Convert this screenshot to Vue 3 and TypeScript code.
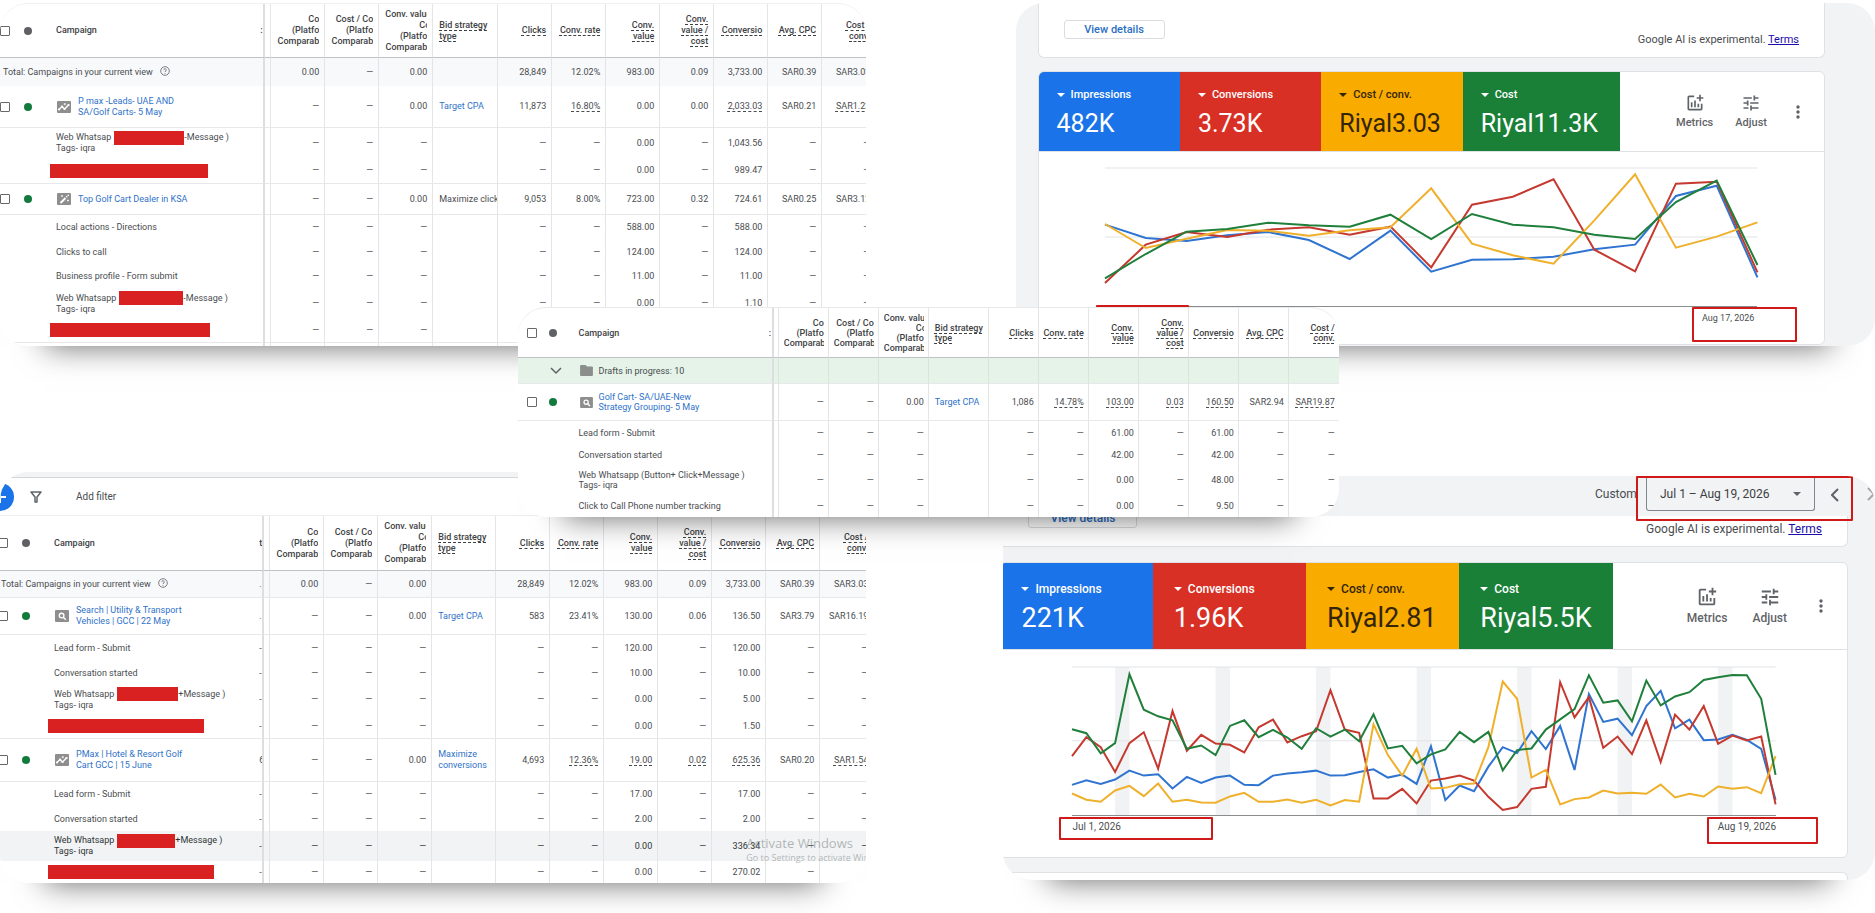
<script setup lang="ts">
type IconName = 'pmax' | 'wand' | 'search' | 'folder'

interface Row {
  kind: 'total' | 'campaign' | 'goal' | 'drafts'
  height: number
  name: string[]
  cells: string[]
  icon?: IconName
  bid?: string
  bidPlain?: boolean
  redact?: number
  after?: string
  bar?: number
  line?: boolean
  hover?: boolean
  tail?: string
}

interface Report {
  id: string
  headHeight: number
  headTail: string
  toolbar?: boolean
  watermark?: boolean
  rows: Row[]
}

interface Series {
  color: string
  points: number[]
}

interface Overview {
  id: string
  range?: string
  tiles: { label: string; value: string; tone: string }[]
  share: number[]
  chartHeight: number
  middle: number
  bands: number[]
  series: Series[]
  from: string
  to: string
}

const D = '—'
// A leading "~" marks a figure with a dashed underline.
const none = [D, D, D, D, D, D, D, D, D, D]
const goal = (value: string, conv: string): string[] => [D, D, D, D, D, value, D, conv, D, D]

const reports: Report[] = [
  {
    id: 'first',
    headHeight: 54,
    headTail: ':',
    rows: [
      { kind: 'total', height: 28, name: ['Total: Campaigns in your current view'], cells: ['0.00', D, '0.00', '28,849', '12.02%', '983.00', '0.09', '3,733.00', 'SAR0.39', 'SAR3.03'] },
      { kind: 'campaign', height: 42, icon: 'pmax', name: ['P max -Leads- UAE AND', 'SA/Golf Carts- 5 May'], bid: 'Target CPA', line: true, cells: [D, D, '0.00', '11,873', '~16.80%', '0.00', '0.00', '~2,033.03', 'SAR0.21', '~SAR1.23'] },
      { kind: 'goal', height: 30, name: ['Web Whatsap', 'Tags- iqra'], redact: 70, after: '-Message )', cells: goal('0.00', '1,043.56') },
      { kind: 'goal', height: 26, name: [], bar: 158, line: true, cells: goal('0.00', '989.47') },
      { kind: 'campaign', height: 31, icon: 'wand', name: ['Top Golf Cart Dealer in KSA'], bid: 'Maximize clicks', bidPlain: true, line: true, cells: [D, D, '0.00', '9,053', '8.00%', '723.00', '0.32', '724.61', 'SAR0.25', 'SAR3.12'] },
      { kind: 'goal', height: 25, name: ['Local actions - Directions'], cells: goal('588.00', '588.00') },
      { kind: 'goal', height: 24, name: ['Clicks to call'], cells: goal('124.00', '124.00') },
      { kind: 'goal', height: 25, name: ['Business profile - Form submit'], cells: goal('11.00', '11.00') },
      { kind: 'goal', height: 29, name: ['Web Whatsapp', 'Tags- iqra'], redact: 64, after: '-Message )', cells: goal('0.00', '1.10') },
      { kind: 'goal', height: 25, name: [], bar: 160, line: true, cells: none },
      { kind: 'goal', height: 3, name: [], cells: [] },
    ],
  },
  {
    id: 'second',
    headHeight: 55,
    headTail: 't',
    toolbar: true,
    watermark: true,
    rows: [
      { kind: 'total', height: 27, name: ['Total: Campaigns in your current view'], line: true, tail: '.', cells: ['0.00', D, '0.00', '28,849', '12.02%', '983.00', '0.09', '3,733.00', 'SAR0.39', 'SAR3.03'] },
      { kind: 'campaign', height: 37, icon: 'search', name: ['Search | Utility & Transport', 'Vehicles | GCC | 22 May'], bid: 'Target CPA', line: true, tail: '.', cells: [D, D, '0.00', '583', '23.41%', '130.00', '0.06', '136.50', 'SAR3.79', 'SAR16.19'] },
      { kind: 'goal', height: 26, name: ['Lead form - Submit'], tail: '-', cells: goal('120.00', '120.00') },
      { kind: 'goal', height: 24, name: ['Conversation started'], tail: '-', cells: goal('10.00', '10.00') },
      { kind: 'goal', height: 29, name: ['Web Whatsapp', 'Tags- iqra'], redact: 61, after: '+Message )', tail: '-', cells: goal('0.00', '5.00') },
      { kind: 'goal', height: 25, name: [], bar: 156, line: true, tail: '-', cells: goal('0.00', '1.50') },
      { kind: 'campaign', height: 43, icon: 'pmax', name: ['PMax | Hotel & Resort Golf', 'Cart GCC | 15 June'], bid: 'Maximize conversions', line: true, tail: '6', cells: [D, D, '0.00', '4,693', '~12.36%', '~19.00', '~0.02', '~625.36', 'SAR0.20', '~SAR1.54'] },
      { kind: 'goal', height: 25, name: ['Lead form - Submit'], tail: '-', cells: goal('17.00', '17.00') },
      { kind: 'goal', height: 24, name: ['Conversation started'], tail: '-', cells: goal('2.00', '2.00') },
      { kind: 'goal', height: 30, name: ['Web Whatsapp', 'Tags- iqra'], redact: 58, after: '+Message )', hover: true, tail: '-', cells: goal('0.00', '336.34') },
      { kind: 'goal', height: 22, name: [], bar: 166, tail: '-', cells: goal('0.00', '270.02') },
    ],
  },
  {
    id: 'front',
    headHeight: 50,
    headTail: ':',
    rows: [
      { kind: 'drafts', height: 26, icon: 'folder', name: ['Drafts in progress: 10'], line: true, cells: ['', '', '', '', '', '', '', '', '', ''] },
      { kind: 'campaign', height: 37, icon: 'search', name: ['Golf Cart- SA/UAE-New', 'Strategy Grouping- 5 May'], bid: 'Target CPA', line: true, cells: [D, D, '0.00', '1,086', '~14.78%', '~103.00', '~0.03', '~160.50', 'SAR2.94', '~SAR19.87'] },
      { kind: 'goal', height: 23, name: ['Lead form - Submit'], cells: goal('61.00', '61.00') },
      { kind: 'goal', height: 22, name: ['Conversation started'], cells: goal('42.00', '42.00') },
      { kind: 'goal', height: 28, name: ['Web Whatsapp (Button+ Click+Message )', 'Tags- iqra'], cells: goal('0.00', '48.00') },
      { kind: 'goal', height: 23, name: ['Click to Call Phone number tracking'], cells: goal('0.00', '9.50') },
    ],
  },
]

const platformHeads: string[][] = [
  ['Co', '(Platfo', 'Comparab'],
  ['Cost / Co', '(Platfo', 'Comparab'],
  ['Conv. value', '|Co', '(Platfo', 'Comparab'],
]
const metricHeads: string[][] = [
  ['Clicks'],
  ['Conv. rate'],
  ['Conv.', 'value'],
  ['Conv.', 'value /', 'cost'],
  ['Conversio'],
  ['Avg. CPC'],
  ['Cost /', 'conv.'],
]

const BLUE = '#2f74d0'
const RED = '#c5392f'
const AMBER = '#efb02c'
const GREEN = '#1f7f3b'

const overviews: Overview[] = [
  {
    id: 'upper',
    tiles: [
      { label: 'Impressions', value: '482K', tone: 'blue' },
      { label: 'Conversions', value: '3.73K', tone: 'red' },
      { label: 'Cost / conv.', value: 'Riyal3.03', tone: 'amber' },
      { label: 'Cost', value: 'Riyal11.3K', tone: 'green' },
    ],
    share: [18, 18, 18, 20],
    chartHeight: 414,
    middle: 207,
    bands: [],
    series: [
      { color: BLUE, points: [170, 210, 219, 202, 192, 216, 273, 188, 311, 275, 274, 266, 244, 230, 84, 53, 328] },
      { color: RED, points: [345, 230, 192, 207, 185, 178, 200, 176, 298, 110, 86, 34, 245, 310, 47, 41, 313] },
      { color: AMBER, points: [168, 240, 212, 186, 188, 203, 187, 178, 61, 227, 262, 287, 157, 19, 239, 206, 163] },
      { color: GREEN, points: [331, 258, 191, 183, 164, 172, 176, 140, 213, 138, 170, 178, 200, 213, 102, 38, 291] },
    ],
    from: '',
    to: 'Aug 17, 2026',
  },
  {
    id: 'lower',
    range: 'Jul 1 – Aug 19, 2026',
    tiles: [
      { label: 'Impressions', value: '221K', tone: 'blue' },
      { label: 'Conversions', value: '1.96K', tone: 'red' },
      { label: 'Cost / conv.', value: 'Riyal2.81', tone: 'amber' },
      { label: 'Cost', value: 'Riyal5.5K', tone: 'green' },
    ],
    share: [18, 18.1, 18.1, 18.2],
    chartHeight: 447,
    middle: 223,
    bands: [3, 10, 17, 24, 31, 38, 45],
    series: [
      { color: BLUE, points: [356, 342, 353, 340, 313, 328, 324, 367, 332, 350, 334, 328, 356, 357, 328, 322, 318, 313, 328, 327, 317, 309, 334, 325, 353, 239, 402, 358, 375, 301, 242, 260, 194, 248, 178, 311, 82, 166, 156, 206, 118, 72, 185, 159, 221, 219, 205, 220, 247, 401] },
      { color: RED, points: [269, 212, 242, 317, 230, 197, 307, 133, 253, 205, 231, 235, 258, 182, 159, 228, 209, 194, 70, 189, 199, 397, 397, 368, 412, 343, 337, 328, 343, 392, 432, 423, 368, 362, 46, 152, 91, 244, 210, 263, 161, 287, 144, 189, 118, 232, 207, 222, 210, 415] },
      { color: AMBER, points: [382, 401, 407, 373, 359, 390, 352, 407, 401, 409, 410, 391, 380, 407, 407, 400, 410, 401, 418, 402, 407, 173, 266, 328, 247, 367, 365, 354, 352, 242, 44, 96, 334, 311, 415, 399, 394, 373, 382, 380, 383, 355, 394, 383, 391, 361, 368, 363, 381, 269] },
      { color: GREEN, points: [188, 200, 261, 230, 22, 129, 149, 161, 247, 237, 266, 178, 161, 212, 190, 213, 247, 185, 210, 189, 224, 143, 246, 238, 291, 264, 249, 196, 227, 196, 312, 251, 246, 189, 158, 127, 25, 108, 101, 164, 41, 116, 89, 76, 39, 31, 24, 25, 96, 326] },
    ],
    from: 'Jul 1, 2026',
    to: 'Aug 19, 2026',
  },
]

const toPoints = (values: number[]): string =>
  values.map((v, i) => `${(i * 1000) / (values.length - 1)},${v}`).join(' ')
const bandX = (start: number): number => (start * 1000) / 49
</script>

<template>
  <main class="board">
    <section v-for="report in reports" :key="report.id" class="report" :class="report.id">
      <template v-if="report.toolbar">
        <div class="strip"></div>
        <div class="toolbar">
          <button class="add" type="button" aria-label="New campaign">
            <svg viewBox="0 0 16 16"><path d="M8 2v12M2 8h12" stroke="#fff" stroke-width="2" /></svg>
          </button>
          <svg class="funnel" viewBox="0 0 12 12">
            <path d="M1 1h10L7 6v5H5V6z" fill="none" stroke="#5f6368" stroke-width="1.5" stroke-linejoin="round" />
          </svg>
          <button class="filter" type="button">Add filter</button>
        </div>
      </template>

      <table>
        <colgroup>
          <col />
          <col class="c-gap" />
          <col v-for="n in 3" :key="n" class="c-num" />
          <col class="c-bid" />
          <col v-for="n in 7" :key="n + 3" class="c-num" />
        </colgroup>
        <thead>
          <tr :style="{ height: report.headHeight + 'px' }">
            <th class="edge">
              <div class="lead">
                <input type="checkbox" aria-label="Select all campaigns" />
                <i class="dot"></i>
                <span>Campaign</span>
                <span class="tail">{{ report.headTail }}</span>
              </div>
            </th>
            <th></th>
            <th v-for="(lines, i) in platformHeads" :key="'p' + i">
              <div class="clip">
                <div v-for="(line, k) in lines" :key="k" :class="{ cut: line[0] === '|' }">{{ line.replace('|', '') }}</div>
              </div>
            </th>
            <th class="bid"><div class="under">Bid strategy<br />type</div></th>
            <th v-for="(lines, i) in metricHeads" :key="'m' + i">
              <div v-for="line in lines" :key="line" class="under">{{ line }}</div>
            </th>
          </tr>
        </thead>
        <tbody>
          <tr
            v-for="(row, r) in report.rows"
            :key="r"
            :class="[row.kind, { line: row.line, hover: row.hover }]"
            :style="{ height: row.height + 'px' }"
          >
            <td class="edge">
              <div class="lead">
                <template v-if="row.kind === 'campaign'">
                  <input type="checkbox" :aria-label="'Select ' + row.name.join(' ')" />
                  <i class="dot on"></i>
                </template>
                <svg v-if="row.kind === 'drafts'" class="expand" viewBox="0 0 12 12">
                  <path d="M1 3l5 5 5-5" fill="none" stroke="#5f6368" stroke-width="1.5" />
                </svg>
                <svg v-if="row.icon === 'folder'" class="badge" viewBox="0 0 14 12">
                  <path d="M1 0h5l1.500 1.500H13a1 1 0 0 1 1 1V11a1 1 0 0 1-1 1H1a1 1 0 0 1-1-1V1a1 1 0 0 1 1-1z" fill="#8a8f8b" />
                </svg>
                <svg v-else-if="row.icon" class="badge" viewBox="0 0 14 12">
                  <rect width="14" height="12" rx="1" fill="#8e8e8e" />
                  <g v-if="row.icon === 'pmax'" fill="none" stroke="#fff" stroke-width="1.4">
                    <path d="M2 8.500l3-3 2.500 2.500 4-4" />
                    <path d="M2 8.500h.1M5 5.500h.1M7.500 8h.1M11.500 4h.1" stroke-width="2.200" stroke-linecap="round" />
                    <path d="M7.800 2v2.200M6.700 3.100h2.200" stroke-width=".8" />
                  </g>
                  <g v-else-if="row.icon === 'wand'" fill="none" stroke="#fff">
                    <path d="M3.500 10l5-5" stroke-width="1.900" />
                    <path d="M9.300 4.200l.9-.9" stroke-width="1.900" />
                    <path d="M5 2v2M4 3h2M11.300 1.500v1.600M10.500 2.300h1.600M11 6.500v2M10 7.500h2" stroke-width=".8" />
                  </g>
                  <g v-else fill="none" stroke="#fff">
                    <circle cx="6.600" cy="5.600" r="2.300" stroke-width="1.400" />
                    <path d="M8.300 7.300l2.500 2.500" stroke-width="1.600" />
                  </g>
                </svg>
                <a v-if="row.kind === 'campaign'" class="name" href="#">
                  <span v-for="part in row.name" :key="part">{{ part }}</span>
                </a>
                <div v-else class="name">
                  <span v-for="(part, k) in row.name" :key="k" class="part">
                    {{ part }}<template v-if="row.redact && k === 0"><i class="redact" :style="{ width: row.redact + 'px' }"></i>{{ row.after }}</template>
                  </span>
                  <i v-if="row.bar" class="redact whole" :style="{ width: row.bar + 'px' }"></i>
                </div>
                <svg v-if="row.kind === 'total'" class="help" viewBox="0 0 10 10" fill="none" stroke="#6b6f73">
                  <circle cx="5" cy="5" r="4.300" stroke-width=".9" />
                  <path d="M3.700 4.100C3.700 2.300 6.400 2.400 6.300 4 6.200 4.900 5 5 5 6.100M5 7v.8" stroke-width=".9" />
                </svg>
                <span class="tail">{{ row.tail }}</span>
              </div>
            </td>
            <td></td>
            <td v-for="i in 3" :key="i">{{ row.cells[i - 1] }}</td>
            <td class="bid" :class="{ wrap: !row.bidPlain }">
              <a v-if="row.bid && !row.bidPlain" href="#">{{ row.bid }}</a>
              <template v-else>{{ row.bid }}</template>
            </td>
            <td v-for="i in 7" :key="i + 3">
              <span :class="{ under: row.cells[i + 2]?.[0] === '~' }">{{ row.cells[i + 2]?.replace('~', '') }}</span>
            </td>
          </tr>
        </tbody>
      </table>

      <div v-if="report.watermark" class="watermark">
        <b>Activate Windows</b>
        <span>Go to Settings to activate Windows.</span>
      </div>
    </section>

    <section v-for="view in overviews" :key="view.id" class="overview" :class="view.id">
      <header v-if="view.range">
        <label for="range">Custom</label>
        <div class="frame">
          <div class="picker">
            <select id="range"><option>{{ view.range }}</option></select>
            <svg viewBox="0 0 8 4"><path d="M0 0h8L4 4z" fill="#5f6368" /></svg>
          </div>
          <button class="step" type="button" aria-label="Previous period">
            <svg viewBox="0 0 8 14"><path d="M7 1L1 7l6 6" fill="none" stroke="#5f6368" stroke-width="2" /></svg>
          </button>
        </div>
        <button class="step next" type="button" aria-label="Next period">
          <svg viewBox="0 0 8 14"><path d="M1 1l6 6-6 6" fill="none" stroke="#a5a8ab" stroke-width="2" /></svg>
        </button>
      </header>

      <div class="card notice">
        <button class="details" type="button">View details</button>
        <p>Google AI is experimental. <a href="#">Terms</a></p>
      </div>

      <div class="card">
        <div class="summary">
          <button
            v-for="(tile, i) in view.tiles"
            :key="tile.label"
            type="button"
            class="tile"
            :class="tile.tone"
            :style="{ width: view.share[i] + '%' }"
          >
            <span class="label"><svg viewBox="0 0 8 4"><path d="M0 0h8L4 4z" fill="currentColor" /></svg>{{ tile.label }}</span>
            <span class="value">{{ tile.value }}</span>
          </button>
          <div class="actions">
            <button type="button">
              <svg viewBox="0 0 24 24"><path fill="currentColor" d="M22 5v2h-3v3h-2V7h-3V5h3V2h2v3h3zm-3 14H5V5h6V3H5c-1.100 0-2 .9-2 2v14c0 1.100.9 2 2 2h14c1.100 0 2-.9 2-2v-6h-2v6zm-4-6v4h2v-4h-2zm-4 4h2V9h-2v8zm-2 0v-6H7v6h2z" /></svg>
              Metrics
            </button>
            <button type="button">
              <svg viewBox="0 0 24 24"><path fill="currentColor" d="M3 17v2h6v-2H3zM3 5v2h10V5H3zm10 16v-2h8v-2h-8v-2h-2v6h2zM7 9v2H3v2h4v2h2V9H7zm14 4v-2H11v2h10zm-6-4h2V7h4V5h-4V3h-2v6z" /></svg>
              Adjust
            </button>
            <button class="more" type="button" aria-label="More">
              <svg viewBox="0 0 4 14" fill="currentColor"><circle cx="2" cy="2" r="1.700" /><circle cx="2" cy="7" r="1.700" /><circle cx="2" cy="12" r="1.700" /></svg>
            </button>
          </div>
        </div>

        <div class="chart">
          <svg :viewBox="`0 0 1000 ${view.chartHeight}`" preserveAspectRatio="none">
            <rect v-for="b in view.bands" :key="b" :x="bandX(b)" y="0" :width="bandX(1)" :height="view.chartHeight" fill="#f0f2f3" />
            <path :d="`M0 0H1000M0 ${view.middle}H1000`" class="grid-line" />
            <polyline v-for="s in view.series" :key="s.color" :points="toPoints(s.points)" :stroke="s.color" class="series" />
          </svg>
          <div class="dates">
            <span class="from">{{ view.from }}</span>
            <span class="to">{{ view.to }}</span>
          </div>
        </div>
      </div>

      <div v-if="view.range" class="card next-card"></div>
    </section>
  </main>
</template>

<style>
body {
  margin: 0;
  background: #fff;
}
</style>

<style scoped>
.board {
  position: relative;
  display: grid;
  grid-template-columns: 46.2% 1fr;
  grid-template-areas: 'a b' 'c d';
  row-gap: 126px;
  align-items: start;
  align-content: start;
  padding-top: 3px;
  overflow: hidden;
  min-height: 100vh;
  box-sizing: border-box;
  font-family: Roboto, 'Liberation Sans', sans-serif;
  color: #4a4d50;
}
.board * {
  box-sizing: border-box;
}
button {
  font: inherit;
  color: inherit;
  border: 0;
  padding: 0;
  background: none;
}
svg {
  display: block;
}

/* ---- campaign tables ---- */
.report,
.overview {
  position: relative;
  overflow: hidden;
  border-radius: 28px;
  box-shadow: 0 45px 30px -45px rgba(0, 0, 0, 0.6);
}
.report {
  --num: 54px;
  --bid: 65px;
  --gap: 6px;
  --start: 0px;
  --g1: 14px;
  --g2: 24px;
  --text: 56px;
  --over: 10px;
  background: #fff;
  font-size: 9px;
  line-height: 11px;
}
.first {
  grid-area: a;
  border-top: 1px solid #f0f1f2;
}
.second {
  grid-area: c;
  --bid: 64px;
  --start: -2px;
  --text: 54px;
  --over: 8px;
}
.front {
  position: absolute;
  z-index: 2;
  top: 307px;
  left: 27.6%;
  width: 43.8%;
  --num: 50px;
  --bid: 60px;
  --gap: 5px;
  --start: 9px;
  --g1: 12px;
  --g2: 22px;
  --text: 61px;
  --over: 0px;
  border-top: 1px solid #e8e9ea;
  line-height: 10px;
}
.strip {
  height: 6px;
  background: #f1f3f4;
  border-bottom: 1px solid #d5d8da;
}
.toolbar {
  display: flex;
  align-items: center;
  height: 38px;
  border-bottom: 1px solid #eceeef;
  font-size: 10px;
}
.add {
  width: 28px;
  height: 28px;
  margin-left: -14px;
  padding: 6px;
  border-radius: 50%;
  background: #1a73e8;
}
.funnel {
  width: 12px;
  height: 12px;
  margin-left: 16px;
}
.filter {
  margin-left: 34px;
}
table {
  width: calc(100% + var(--over));
  border-spacing: 0;
  table-layout: fixed;
}
.c-gap {
  width: var(--gap);
}
.c-num {
  width: var(--num);
}
.c-bid {
  width: var(--bid);
}
th,
td {
  padding: 0 5px 0 0;
  border-right: 1px solid #e3e5e7;
  text-align: right;
  vertical-align: middle;
  white-space: nowrap;
}
.front th,
.front td {
  padding-right: 4px;
}
.front th:last-child,
.front td:last-child {
  border-right: 0;
}
th {
  border-bottom: 1px solid #bfc2c4;
  font-weight: 500;
  color: #3e4144;
}
.report th:nth-child(2),
.report td:nth-child(2) {
  padding: 0;
}
.report .edge {
  padding: 0;
  border-right: 2px solid #dcdee0;
  text-align: left;
}
.line td {
  border-bottom: 1px solid #e6e8e9;
}
.total td {
  background: #f8f9fb;
}
.drafts td {
  background: #e5f3e8;
  border-right-color: #d8e6da;
}
.hover td {
  background: #f1f3f4;
  color: #303336;
}
.lead {
  display: flex;
  align-items: center;
  padding-left: var(--start);
}
.second .lead {
  padding-left: 0;
  margin-left: var(--start);
}
.report .goal .lead {
  padding-left: var(--text);
  margin-left: 0;
}
.report .total .lead {
  padding-left: 3px;
}
.tail {
  width: 3px;
  margin-left: auto;
  overflow: hidden;
}
input {
  appearance: none;
  flex: none;
  width: 10px;
  height: 10px;
  margin: 0 var(--g1) 0 0;
  border: 1px solid #66696c;
  border-radius: 1px;
  background: #fff;
}
.dot {
  flex: none;
  width: 8px;
  height: 8px;
  margin-right: var(--g2);
  border-radius: 50%;
  background: #5f6164;
}
.dot.on {
  background: #137a3e;
}
.badge {
  flex: none;
  width: 14px;
  height: 12px;
  margin: 0 7px 0 1px;
}
.front .badge {
  width: 13px;
  height: 11px;
  margin-right: 6px;
}
.expand {
  width: 12px;
  height: 12px;
  margin: 0 17px 0 23px;
}
.help {
  width: 10px;
  height: 10px;
  margin: -3px 0 0 7px;
}
a {
  color: #2f72c9;
  text-decoration: none;
}
.name span {
  display: block;
}
.name .part {
  display: flex;
  align-items: center;
  height: 11px;
  white-space: pre;
}
.front .name .part {
  height: 10px;
}
.redact {
  display: block;
  flex: none;
  height: 14px;
  background: #d92121;
}
.part .redact {
  margin-left: 3px;
}
.whole {
  margin-left: -6px;
}
.clip {
  margin-left: 6px;
  overflow: hidden;
}
.front .clip {
  margin-left: 5px;
}
.cut {
  width: 8px;
  margin-left: auto;
  overflow: hidden;
}
.under {
  text-decoration: underline dashed 1px;
  text-underline-offset: 2px;
  text-decoration-skip-ink: none;
}
.report .bid {
  padding: 0 0 0 6px;
  text-align: left;
  overflow: hidden;
}
td.wrap {
  white-space: normal;
}
.watermark {
  position: absolute;
  right: 0;
  bottom: 19px;
  width: 120px;
  overflow: hidden;
  white-space: nowrap;
  color: rgba(110, 115, 120, 0.5);
  font-family: 'Open Sans', 'Noto Sans', sans-serif;
}
.watermark b {
  display: block;
  font-size: 13px;
  line-height: 18px;
  font-weight: 400;
}
.watermark span {
  line-height: 12px;
}

/* ---- overview charts ---- */
.overview {
  justify-self: end;
  background: #f1f3f4;
}
.upper {
  grid-area: b;
  width: 85.2%;
  padding: 0 50px 1px 22px;
  --small: 11px;
  --body: 11px;
  --value: 25px;
  --tile: 80px;
  --pad: 18px;
  --chart: 139px;
  --date: 9px;
  --icon: 20px;
  --between: 22px;
}
.lower {
  grid-area: d;
  width: 86.4%;
  margin-top: 4px;
  padding-right: 27px;
  --small: 12px;
  --body: 12px;
  --value: 27px;
  --tile: 87px;
  --pad: 21px;
  --chart: 149px;
  --date: 10px;
  --icon: 22px;
  --between: 25px;
}
.card {
  background: #fff;
  border: 1px solid #dfe1e4;
  border-radius: 6px;
  overflow: hidden;
}
.notice {
  display: flex;
  align-items: flex-end;
  justify-content: space-between;
  height: 55px;
  margin-bottom: 13px;
  padding: 0 25px 0 25px;
  border-top: 0;
  border-radius: 0 0 6px 6px;
}
.lower .card {
  margin-left: -4px;
}
.lower .notice {
  height: 31px;
  margin-bottom: 15px;
  padding-left: 28px;
}
.details {
  flex: none;
  width: 101px;
  height: 19px;
  margin-bottom: 18px;
  border: 1px solid #dadce0;
  border-radius: 3px;
  background: #fff;
  color: #2a6fc4;
  font-size: var(--small);
  line-height: 17px;
  font-weight: 500;
}
.lower .details {
  width: 109px;
  height: 20px;
}
.notice p {
  margin: 0 0 10px;
  font-size: var(--body);
  line-height: 14px;
}
.notice a {
  color: #1a0dab;
  text-decoration: underline;
}
.summary {
  display: flex;
  height: var(--tile);
  border-bottom: 1px solid #dfe1e4;
}
.tile {
  display: flex;
  flex: none;
  flex-direction: column;
  justify-content: center;
  align-items: flex-start;
  gap: 3px;
  padding: 5px 0 0 var(--pad);
  color: #fff;
}
.blue {
  background: #1a73e8;
}
.red {
  background: #d93025;
}
.amber {
  background: #f9ab00;
  color: #33240a;
}
.green {
  background: #1a8038;
}
.label {
  display: flex;
  align-items: center;
  gap: 6px;
  font-size: var(--small);
  line-height: 16px;
  font-weight: 500;
}
.label svg {
  width: 8px;
  height: 4px;
}
.value {
  font-size: var(--value);
  line-height: 36px;
}
.actions {
  display: flex;
  flex: 1;
  align-items: center;
  justify-content: flex-end;
  gap: var(--between);
  padding-right: 24px;
  color: #5f6368;
  font-size: var(--small);
  font-weight: 500;
  line-height: 16px;
}
.actions svg {
  width: var(--icon);
  height: var(--icon);
  margin: 0 auto 2px;
}
.actions .more {
  margin-left: 7px;
}
.actions .more svg {
  width: 4px;
  height: 14px;
  margin: 0;
}
.chart {
  padding: 16px 67px 0 66px;
}
.lower .chart {
  padding: 17px 71px 0 72px;
}
.chart svg {
  width: 100%;
  height: var(--chart);
  overflow: visible;
  border-bottom: 1px solid #8a8d90;
}
.grid-line {
  fill: none;
  stroke: #e1e3e5;
  stroke-width: 1px;
  vector-effect: non-scaling-stroke;
}
.series {
  fill: none;
  stroke-width: 2px;
  vector-effect: non-scaling-stroke;
}
.dates {
  display: flex;
  justify-content: space-between;
  height: 37px;
  padding-top: 5px;
  font-size: var(--date);
  line-height: 12px;
}
.lower .dates {
  height: 41px;
}
.dates span {
  position: relative;
  min-width: 55px;
  height: 12px;
}
.lower .dates .from {
  min-width: 0;
}
.dates span::after {
  content: '';
  position: absolute;
  inset: -5px -40px -18px -10px;
  border: 2px solid #d01a1a;
  border-radius: 1px;
}
.upper .from::after {
  inset: -7px -29px -18px -9px;
}
.lower .from::after {
  inset: -4px -92px -7px -13px;
}
.lower .to::after {
  inset: -4px -42px -11px -11px;
}
header {
  display: flex;
  justify-content: flex-end;
  align-items: flex-start;
  height: 40px;
  margin-right: -27px;
  font-size: var(--body);
  line-height: 36px;
}
header label {
  width: 41px;
  overflow: hidden;
}
.frame {
  position: relative;
  z-index: 1;
  display: flex;
  align-items: center;
  height: 45px;
  padding: 0 12px 8px 8px;
  margin-right: 14px;
  border: 2px solid #d01a1a;
  border-radius: 1px;
}
.picker {
  display: flex;
  align-items: center;
  width: 169px;
  height: 33px;
  margin-right: 16px;
  padding: 0 13px 0 13px;
  border: 1px solid #80868b;
  border-top: 0;
  border-radius: 0 0 3px 3px;
}
.picker svg {
  width: 8px;
  height: 4px;
}
select {
  flex: 1;
  min-width: 0;
  padding: 0;
  appearance: none;
  border: 0;
  background: none;
  font: inherit;
  color: #3c4043;
}
.step svg {
  width: 8px;
  height: 14px;
}
.next {
  margin-top: 11px;
}
.next-card {
  height: 8px;
  margin-top: 14px;
  border-bottom: 0;
  border-radius: 6px 6px 0 0;
}
</style>
